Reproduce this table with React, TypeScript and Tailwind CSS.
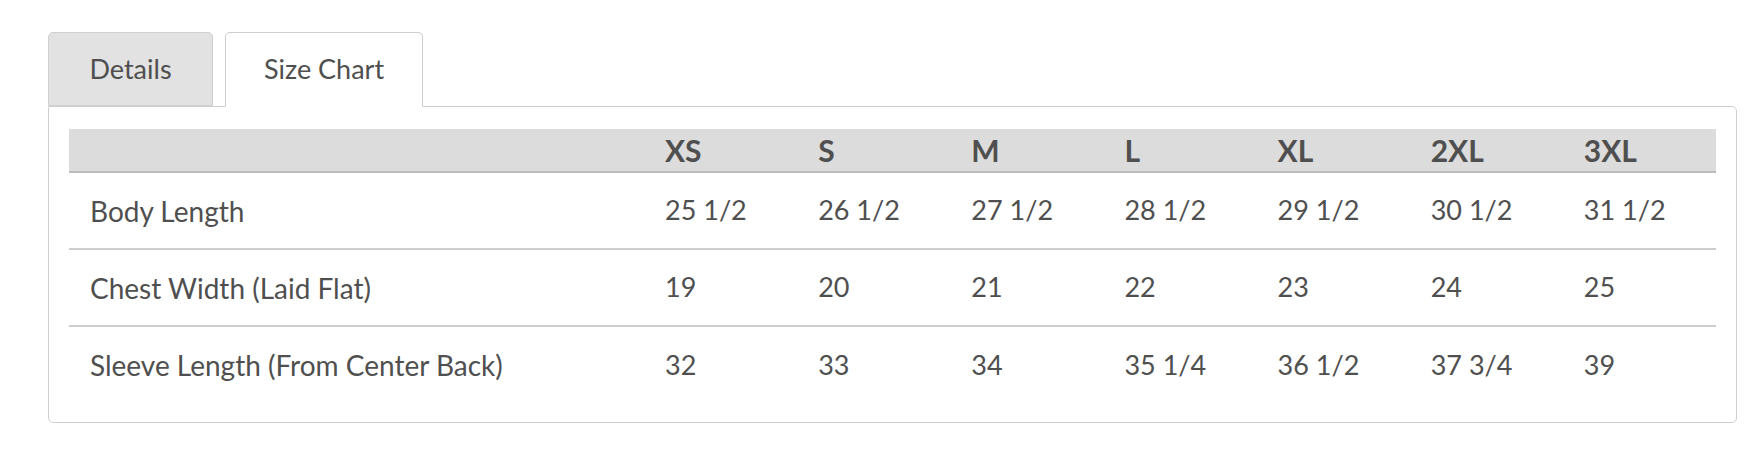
import React, { useState } from "react";

const sizes = ["XS", "S", "M", "L", "XL", "2XL", "3XL"];

const rows = [
  { label: "Body Length", values: ["25 1/2", "26 1/2", "27 1/2", "28 1/2", "29 1/2", "30 1/2", "31 1/2"] },
  { label: "Chest Width (Laid Flat)", values: ["19", "20", "21", "22", "23", "24", "25"] },
  { label: "Sleeve Length (From Center Back)", values: ["32", "33", "34", "35 1/4", "36 1/2", "37 3/4", "39"] },
];

export default function App() {
  const [tab, setTab] = useState("size");

  return (
    <div className="min-h-screen bg-white pl-[48px] pr-[27px] pt-[32px] text-[#4f4f4f] font-['Lato','Liberation_Sans',sans-serif]">
      <div className="flex gap-[12px] relative z-10">
        <button
          onClick={() => setTab("details")}
          className={`w-[165px] rounded-t-[5px] border border-[#cfcfcf] text-[27px] ${
            tab === "details" ? "bg-white border-b-white h-[75px]" : "bg-[#e2e2e2] h-[74px]"
          }`}
        >
          Details
        </button>
        <button
          onClick={() => setTab("size")}
          className={`w-[198px] rounded-t-[5px] border border-[#cfcfcf] text-[27px] ${
            tab === "size" ? "bg-white border-b-white h-[75px]" : "bg-[#e2e2e2] h-[74px]"
          }`}
        >
          Size Chart
        </button>
      </div>
      <div className="-mt-px border border-[#cfcfcf] rounded-b-[5px] rounded-tr-[5px] px-[20px] pt-[22px] pb-[19px]">
        {tab === "size" ? (
          <table className="w-full border-collapse text-left">
            <thead>
              <tr className="bg-[#dcdcdc] border-b-2 border-[#bdbdbd]">
                <th className="w-[575px] h-[43px] p-0"></th>
                {sizes.map((s) => (
                  <th key={s} className="h-[43px] px-[21px] py-0 text-[30px] leading-none font-bold align-middle">
                    {s}
                  </th>
                ))}
              </tr>
            </thead>
            <tbody>
              {rows.map((r, i) => (
                <tr key={r.label} className={i < rows.length - 1 ? "border-b-2 border-[#cdcdcd]" : ""}>
                  <td className="h-[77px] px-[21px] py-0 text-[28px] align-middle">{r.label}</td>
                  {r.values.map((v, j) => (
                    <td key={j} className="h-[77px] px-[21px] py-0 text-[27px] align-middle">
                      {v}
                    </td>
                  ))}
                </tr>
              ))}
            </tbody>
          </table>
        ) : (
          <div className="h-[273px] text-[28px] px-[21px] py-[20px]">Details</div>
        )}
      </div>
    </div>
  );
}
